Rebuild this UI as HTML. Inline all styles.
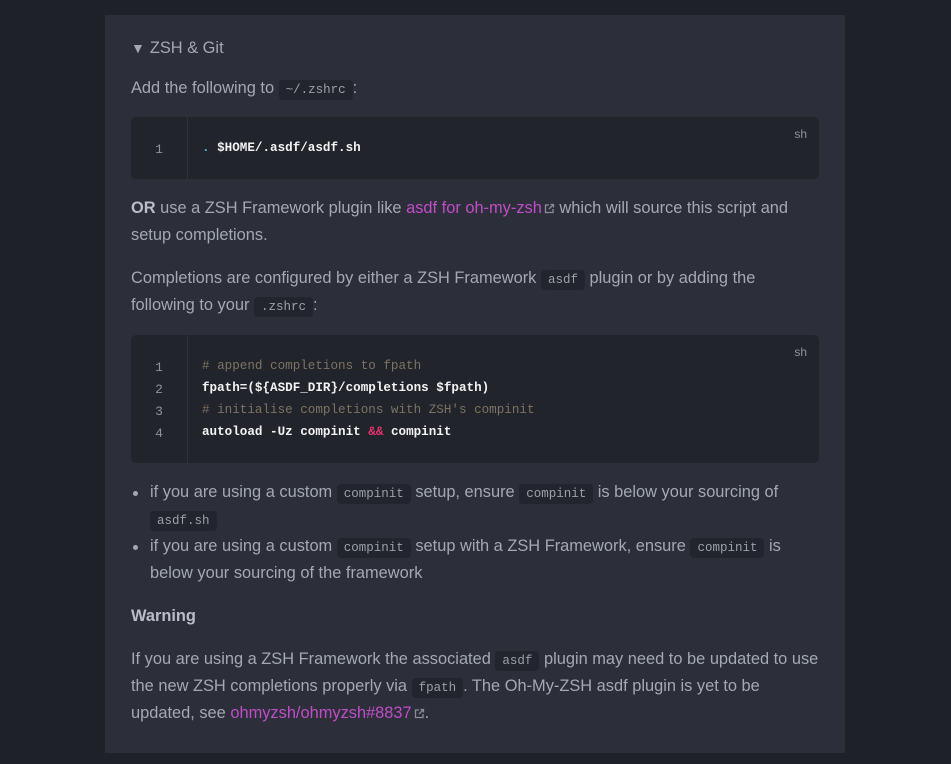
<!DOCTYPE html>
<html><head><style>
body{margin:0;background:#1f2129;width:951px;height:764px;overflow:hidden;font-family:"Liberation Sans",sans-serif;}
.panel{position:absolute;left:105px;top:15px;width:740px;height:738px;background:#2c2f39;}
.t{position:absolute;left:131px;font-size:16.4px;color:#a3a8b2;white-space:nowrap;line-height:27px;}
code{font-family:"Liberation Mono",monospace;font-size:12.5px;background:#22252d;color:#9aa0aa;padding:3px 7px;border-radius:4px;}
.cb{position:absolute;left:131px;width:688px;background:#22242c;border-radius:5px;}
.g{position:absolute;left:56px;top:0;bottom:0;width:1px;background:#30333c;}
.ln{position:absolute;left:0;width:56px;text-align:center;font-family:"Liberation Mono",monospace;font-size:13px;color:#8d929b;}
.cl{position:absolute;left:71px;font-family:"Liberation Mono",monospace;font-size:12.6px;font-weight:bold;color:#f2f2f2;white-space:pre;}
.cm{color:#7b7463;font-weight:normal;}
.lang{position:absolute;right:12px;top:10px;font-size:12px;color:#8d929b;}
a{color:#c04dc8;text-decoration:none;}
.ext{display:inline-block;width:11px;height:11px;margin-left:2px;vertical-align:-1px;}
b{color:#b9bdc5;}
.dot{position:absolute;left:133px;width:5px;height:5px;border-radius:50%;background:#a3a8b2;}
</style></head><body>
<div class="panel"></div>
<div class="t" style="top:35px"><span style="font-size:14px;margin-right:5px">▼</span>ZSH &amp; Git</div>
<div class="t" style="top:75px">Add the following to <code>~/.zshrc</code>:</div>
<div class="cb" style="top:117px;height:62px"><div class="g"></div><div class="lang">sh</div>
<div class="ln" style="top:25px">1</div><div class="cl" style="top:24px"><span style="color:#4fb6d8">.</span> $HOME/.asdf/asdf.sh</div></div>
<div class="t" style="top:195px"><b>OR</b> use a ZSH Framework plugin like <a>asdf for oh-my-zsh</a><svg class="ext" viewBox="0 0 11 11"><path d="M5 2H1.5v7.5H9V6M6.5 1.5h3v3M9.5 1.5L5 6" fill="none" stroke="#8a8e96" stroke-width="1.3"/></svg> which will source this script and</div>
<div class="t" style="top:222px">setup completions.</div>
<div class="t" style="top:265px">Completions are configured by either a ZSH Framework <code>asdf</code> plugin or by adding the</div>
<div class="t" style="top:292px">following to your <code>.zshrc</code>:</div>
<div class="cb" style="top:335px;height:128px"><div class="g"></div><div class="lang">sh</div>
<div class="ln" style="top:25px">1</div><div class="ln" style="top:47px">2</div><div class="ln" style="top:69px">3</div><div class="ln" style="top:91px">4</div>
<div class="cl" style="top:24px"><span class="cm"># append completions to fpath</span></div>
<div class="cl" style="top:46px">fpath=(${ASDF_DIR}/completions $fpath)</div>
<div class="cl" style="top:68px"><span class="cm"># initialise completions with ZSH's compinit</span></div>
<div class="cl" style="top:90px">autoload -Uz compinit <span style="color:#e5336b">&amp;&amp;</span> compinit</div></div>
<div class="dot" style="top:491px"></div><div class="dot" style="top:545px"></div>
<div class="t" style="top:479px;left:150px">if you are using a custom <code>compinit</code> setup, ensure <code>compinit</code> is below your sourcing of</div>
<div class="t" style="top:506px;left:150px"><code>asdf.sh</code></div>
<div class="t" style="top:533px;left:150px">if you are using a custom <code>compinit</code> setup with a ZSH Framework, ensure <code>compinit</code> is</div>
<div class="t" style="top:560px;left:150px">below your sourcing of the framework</div>
<div class="t" style="top:603px"><b>Warning</b></div>
<div class="t" style="top:646px">If you are using a ZSH Framework the associated <code>asdf</code> plugin may need to be updated to use</div>
<div class="t" style="top:673px">the new ZSH completions properly via <code>fpath</code>. The Oh-My-ZSH asdf plugin is yet to be</div>
<div class="t" style="top:700px">updated, see <a>ohmyzsh/ohmyzsh#8837</a><svg class="ext" viewBox="0 0 11 11"><path d="M5 2H1.5v7.5H9V6M6.5 1.5h3v3M9.5 1.5L5 6" fill="none" stroke="#8a8e96" stroke-width="1.3"/></svg>.</div>
</body></html>
